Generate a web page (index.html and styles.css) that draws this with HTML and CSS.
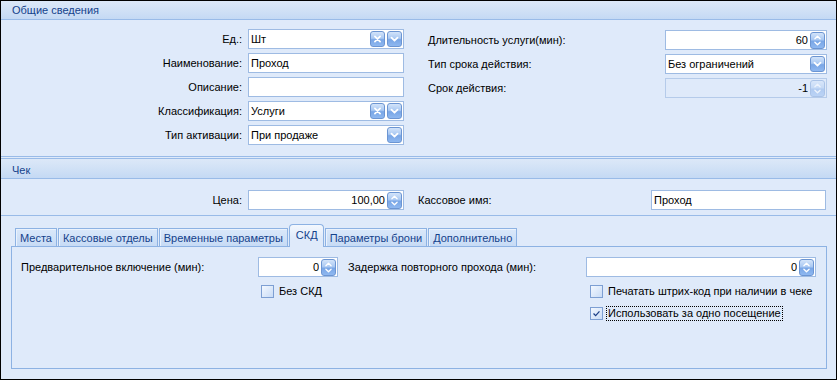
FILE: index.html
```html
<!DOCTYPE html>
<html lang="ru">
<head>
  <meta charset="UTF-8" />
  <title>Услуга</title>
  <link rel="stylesheet" href="styles.css">
</head>

<body>
  <div class="window">

    <section class="group general">
      <div class="group-head">Общие сведения</div>
      <div class="group-body cols">
        <div class="col col-left">
          <div class="row">
            <span class="lbl">Ед.:</span>
            <div class="field"><span class="val">Шт</span>
              <span class="btn"><svg viewBox="0 0 15 16"><path d="M4.5 5 L10.5 11 M10.5 5 L4.5 11" /></svg></span>
              <span class="btn"><svg viewBox="0 0 15 16"><path d="M4 6.5 L7.5 10 L11 6.5" /></svg></span>
            </div>
          </div>
          <div class="row">
            <span class="lbl">Наименование:</span>
            <div class="field"><span class="val">Проход</span></div>
          </div>
          <div class="row">
            <span class="lbl">Описание:</span>
            <div class="field"><span class="val"></span></div>
          </div>
          <div class="row">
            <span class="lbl">Классификация:</span>
            <div class="field"><span class="val">Услуги</span>
              <span class="btn"><svg viewBox="0 0 15 16"><path d="M4.5 5 L10.5 11 M10.5 5 L4.5 11" /></svg></span>
              <span class="btn"><svg viewBox="0 0 15 16"><path d="M4 6.5 L7.5 10 L11 6.5" /></svg></span>
            </div>
          </div>
          <div class="row">
            <span class="lbl">Тип активации:</span>
            <div class="field"><span class="val">При продаже</span>
              <span class="btn"><svg viewBox="0 0 15 16"><path d="M4 6.5 L7.5 10 L11 6.5" /></svg></span>
            </div>
          </div>
        </div>

        <div class="col col-right">
          <div class="row">
            <span class="lbl">Длительность услуги(мин):</span>
            <div class="field num"><span class="val">60</span>
              <span class="btn spin"><svg viewBox="0 0 15 17"><path d="M4.5 6.5 L7.5 3.5 L10.5 6.5 M4.5 10.5 L7.5 13.5 L10.5 10.5" /></svg></span>
            </div>
          </div>
          <div class="row">
            <span class="lbl">Тип срока действия:</span>
            <div class="field"><span class="val">Без ограничений</span>
              <span class="btn"><svg viewBox="0 0 15 16"><path d="M4 6.5 L7.5 10 L11 6.5" /></svg></span>
            </div>
          </div>
          <div class="row">
            <span class="lbl">Срок действия:</span>
            <div class="field num disabled"><span class="val">-1</span>
              <span class="btn spin"><svg viewBox="0 0 15 17"><path d="M4.5 6.5 L7.5 3.5 L10.5 6.5 M4.5 10.5 L7.5 13.5 L10.5 10.5" /></svg></span>
            </div>
          </div>
        </div>
      </div>
    </section>

    <section class="group receipt">
      <div class="group-head">Чек</div>
      <div class="group-body">
        <div class="row">
          <span class="lbl">Цена:</span>
          <div class="field num"><span class="val">100,00</span>
            <span class="btn spin"><svg viewBox="0 0 15 17"><path d="M4.5 6.5 L7.5 3.5 L10.5 6.5 M4.5 10.5 L7.5 13.5 L10.5 10.5" /></svg></span>
          </div>
          <span class="lbl lbl-cash">Кассовое имя:</span>
          <div class="field field-cash"><span class="val">Проход</span></div>
        </div>
      </div>
    </section>

    <div class="tabs">
      <div class="tab-strip">
        <div class="tab">Места</div>
        <div class="tab">Кассовые отделы</div>
        <div class="tab">Временные параметры</div>
        <div class="tab active">СКД</div>
        <div class="tab">Параметры брони</div>
        <div class="tab">Дополнительно</div>
      </div>
      <div class="tab-panel">
        <div class="skd">
          <span class="lbl">Предварительное включение (мин):</span>
          <div class="field num"><span class="val">0</span>
            <span class="btn spin"><svg viewBox="0 0 15 17"><path d="M4.5 6.5 L7.5 3.5 L10.5 6.5 M4.5 10.5 L7.5 13.5 L10.5 10.5" /></svg></span>
          </div>
          <span class="lbl lbl-delay">Задержка повторного прохода (мин):</span>
          <div class="field num"><span class="val">0</span>
            <span class="btn spin"><svg viewBox="0 0 15 17"><path d="M4.5 6.5 L7.5 3.5 L10.5 6.5 M4.5 10.5 L7.5 13.5 L10.5 10.5" /></svg></span>
          </div>

          <label class="chk chk-mid"><span class="box"></span><span class="txt">Без СКД</span></label>
          <label class="chk chk-right"><span class="box"></span><span class="txt">Печатать штрих-код при наличии в чеке</span></label>
          <label class="chk chk-right checked focused">
            <span class="box"><svg viewBox="0 0 13 13"><path d="M3 6.5 L5.5 9 L10 4" /></svg></span>
            <span class="txt">Использовать за одно посещение</span>
          </label>
        </div>
      </div>
    </div>

  </div>
</body>
</html>
```

FILE: styles.css
```css
body {
  margin: 0;
  padding: 0;
  background: #ffffff;
}

.window {
  width: 837px;
  height: 380px;
  box-sizing: border-box;
  border: 1px solid #000000;
  background-color: #dfeafa;
  font-family: "Liberation Sans", Arial, sans-serif;
  font-size: 11px;
  color: #000000;
  display: flex;
  flex-direction: column;
  overflow: hidden;
}

/* group boxes */

.group {
  border-bottom: 1px solid #99bbe8;
}

.receipt {
  border-top: 1px solid #99bbe8;
  margin-top: 1px;
}

.group-head {
  height: 18px;
  line-height: 19px;
  padding-left: 11px;
  color: #15428b;
  background: linear-gradient(to bottom, #dce8f8 0%, #d2e2f6 45%, #c4d9f4 100%);
  border-bottom: 1px solid #99bbe8;
}

.receipt .group-head {
  height: 19px;
  line-height: 22px;
}

.general .group-body {
  height: 136px;
  box-sizing: border-box;
  padding-top: 9px;
}

.cols {
  display: flex;
}

.col {
  display: flex;
  flex-direction: column;
  gap: 4px;
}

.row {
  display: flex;
  align-items: center;
  height: 20px;
  white-space: nowrap;
}

.col-left .lbl {
  width: 247px;
  box-sizing: border-box;
  padding-right: 6px;
  text-align: right;
}

.col-left .field {
  width: 156px;
}

.col-right {
  padding-top: 1px;
}

.col-right .lbl {
  width: 261px;
  box-sizing: border-box;
  padding-left: 24px;
}

.col-right .field {
  width: 162px;
}

.receipt .group-body {
  height: 36px;
  box-sizing: border-box;
  padding-top: 11px;
}

.receipt .lbl {
  width: 247px;
  box-sizing: border-box;
  padding-right: 6px;
  text-align: right;
}

.receipt .field {
  width: 156px;
}

.receipt .lbl-cash {
  width: 247px;
  padding-left: 14px;
  padding-right: 0;
  text-align: left;
}

.receipt .field-cash {
  width: 175px;
}

/* editors */

.field {
  height: 20px;
  box-sizing: border-box;
  border: 1px solid #9ebbe3;
  background: #ffffff;
  display: flex;
  align-items: center;
  gap: 2px;
  padding: 0 1px 0 2px;
}

.field .val {
  flex: 1;
  white-space: nowrap;
  overflow: hidden;
}

.field.num .val {
  text-align: right;
}

.field.disabled {
  background: #dfeafa;
  border-color: #b5cbea;
}

.btn {
  width: 15px;
  height: 16px;
  box-sizing: border-box;
  border: 1px solid #6c95d2;
  border-radius: 3px;
  background: linear-gradient(to bottom, #d3e4fa 0%, #a9c8f2 45%, #79a6e6 55%, #8fb8f0 100%);
  display: flex;
  flex: none;
}

.btn svg {
  width: 100%;
  height: 100%;
  fill: none;
  stroke: #ffffff;
  stroke-width: 2;
  stroke-linecap: round;
  stroke-linejoin: round;
}

.btn.spin {
  height: 17px;
}

.btn.spin svg {
  stroke-width: 1.5;
}

.disabled .btn {
  opacity: 0.45;
}

/* tabs */

.tabs {
  flex: 1;
  padding: 8px 9px 10px 10px;
  display: flex;
  flex-direction: column;
}

.tab-strip {
  display: flex;
  align-items: flex-end;
  gap: 1px;
  padding-left: 4px;
  height: 22px;
  position: relative;
  z-index: 1;
}

.tab {
  height: 18px;
  line-height: 18px;
  box-sizing: border-box;
  padding: 0 4px;
  border: 1px solid #8db2e3;
  border-bottom: none;
  color: #15428b;
  white-space: nowrap;
  background: linear-gradient(to bottom, #dae8fa 0%, #c7dbf5 100%);
  box-shadow: inset 1px 1px 0 #eaf2fd;
}

.tab.active {
  height: 23px;
  line-height: 21px;
  margin-bottom: -1px;
  padding: 0 5px 0 6px;
  border-radius: 4px 4px 0 0;
  background: linear-gradient(to bottom, #f4f8fe 0%, #dfeafa 60%);
  box-shadow: none;
}

.tab-panel {
  flex: 1;
  border: 1px solid #8db2e3;
  padding: 10px 9px 0 9px;
}

.skd {
  display: grid;
  grid-template-columns: 237px 80px 248px 230px;
  grid-template-rows: 20px 15px 15px;
  row-gap: 7px;
  align-items: center;
  white-space: nowrap;
}

.skd .lbl-delay {
  padding-left: 10px;
}

.chk {
  display: flex;
  align-items: center;
  gap: 3px;
}

.chk-mid {
  grid-column: 2 / 4;
  padding-left: 3px;
}

.chk-right {
  grid-column: 4;
  padding-left: 4px;
}

.box {
  width: 13px;
  height: 13px;
  box-sizing: border-box;
  border: 1px solid #7d9fd3;
  background: linear-gradient(135deg, #f3f8ff 0%, #c9dcf6 100%);
  display: flex;
  flex: none;
}

.box svg {
  width: 100%;
  height: 100%;
  fill: none;
  stroke: #1c3f86;
  stroke-width: 1.5;
}

.txt {
  padding: 0 1px;
  border: 1px dotted transparent;
  line-height: 13px;
}

.focused .txt {
  border-color: #000000;
}
```
